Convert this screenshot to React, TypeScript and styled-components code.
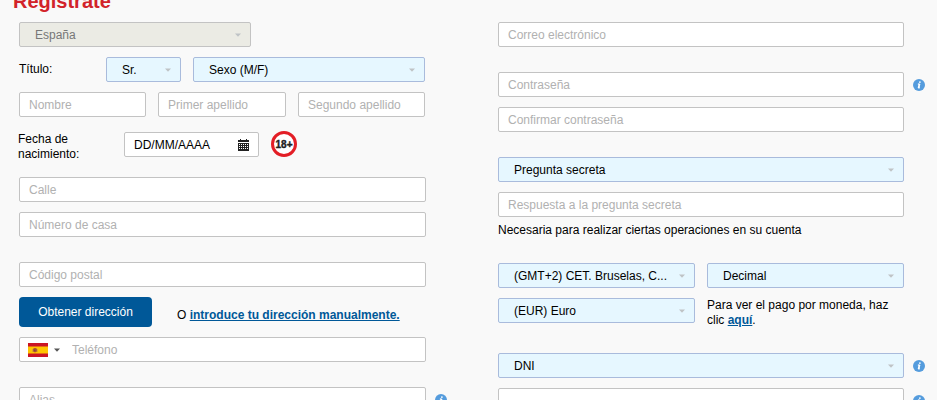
import React from "react";
import styled, { createGlobalStyle } from "styled-components";

const GlobalStyle = createGlobalStyle`
  *, *::before, *::after { box-sizing: border-box; }
  body {
    margin: 0;
    background: #f9f9f9;
    color: #000;
    font: 12px/15px "Liberation Sans", Arial, sans-serif;
  }
  input, select, button { font: inherit; }
`;

const Page = styled.main`
  height: 100vh;
  overflow: hidden;
`;

const Title = styled.h1`
  margin: -11px 0 8px 13px;
  color: #d2232a;
  font-size: 20px;
  line-height: 25px;
`;

const Form = styled.form`
  display: grid;
  grid-template-columns: 428fr 427fr;
  column-gap: 51px;
  padding: 0 12px 0 19px;
`;

const Column = styled.div`
  display: flex;
  flex-direction: column;
  min-width: 0;
`;

const Section = styled.div`
  display: flex;
  flex-direction: column;
  gap: 10px;
  margin-bottom: 25px;
`;

const Line = styled.div`
  display: grid;
  grid-template-columns: minmax(0, 1fr) 12px;
  column-gap: 9px;
  align-items: center;
`;

const Split = styled.div<{ $columns: string }>`
  display: grid;
  grid-template-columns: ${(p) => p.$columns};
  column-gap: 12px;
  align-items: center;
  padding-right: 1px;
`;

const Pair = styled.div`
  display: grid;
  grid-template-columns: 1fr 1fr;
  gap: 10px 12px;
  align-items: start;
`;

const TextField = styled.input`
  display: block;
  width: 100%;
  min-width: 0;
  height: 25px;
  padding: 0 9px;
  border: 1px solid #c3c3c3;
  border-radius: 2px;
  background: #fff;
  color: #000;
  &::placeholder { color: #b1b1b1; opacity: 1; }
`;

const Stack = styled.div`
  display: grid;
  align-items: center;
  min-width: 0;
  > * { grid-area: 1 / 1; }
  > svg { justify-self: end; margin-right: 10px; pointer-events: none; z-index: 1; }
`;

const SelectField = styled.select`
  appearance: none;
  width: 100%;
  min-width: 0;
  height: 25px;
  padding: 2px 20px 0 15px;
  border: 1px solid #a9bbdc;
  border-radius: 2px;
  background: #e6f7ff;
  color: #000;
  text-overflow: ellipsis;
  &:disabled {
    border-color: #c3c3c3;
    background: #ebebe4;
    color: #777;
    opacity: 1;
  }
`;

const BirthRow = styled.div`
  display: flex;
  align-items: flex-start;
  margin: 5px 0 5px -1px;
`;

const BirthLabel = styled.label`
  width: 106px;
  padding-right: 30px;
`;

const DateBox = styled(Stack)`
  width: 135px;
  margin-right: 12px;
`;

const AddressRow = styled.div`
  display: flex;
  align-items: center;
  gap: 25px;
`;

const LookupButton = styled.button`
  width: 133px;
  height: 30px;
  padding: 0;
  border: 0;
  border-radius: 4px;
  background: #005898;
  color: #fff;
`;

const Manual = styled.span`
  padding-top: 6px;
`;

const TextLink = styled.a`
  color: #005898;
  font-weight: bold;
  text-decoration: underline;
`;

const Note = styled.p`
  margin: 0;
`;

const AnswerNote = styled(Note)`
  margin-top: -4px;
`;

const PhoneBox = styled.div`
  display: flex;
  align-items: center;
  height: 25px;
  border: 1px solid #c3c3c3;
  border-radius: 2px;
  background: #fff;
`;

const CountryButton = styled.button`
  display: flex;
  align-items: center;
  gap: 6px;
  padding: 0 3px 0 8px;
  border: 0;
  background: none;
`;

const PhoneInput = styled(TextField)`
  height: 23px;
  border: 0;
`;

const InfoButton = styled.button`
  display: block;
  width: 12px;
  height: 12px;
  padding: 0;
  border: 0;
  background: none;
  svg { display: block; }
`;

const Caret = ({ color = "#bfc3c6" }: { color?: string }) => (
  <svg width="6" height="4" viewBox="0 0 6 4" aria-hidden="true">
    <path d="M0 0.5h6L3 3.8z" fill={color} />
  </svg>
);

const Info = ({ label }: { label: string }) => (
  <InfoButton type="button" aria-label={label}>
    <svg width="12" height="12" viewBox="0 0 12 12" aria-hidden="true">
      <circle cx="6" cy="6" r="6" fill="#559cdd" />
      <circle cx="6.9" cy="3.1" r="0.9" fill="#fff" />
      <path d="M5 5h1.9L6 8.7h.8M4.8 5.1h1.4M5 9h1.7" fill="none" stroke="#fff" strokeWidth="0.8" />
      <path d="M5.6 5h1.6L6.2 9H4.7z" fill="#fff" />
    </svg>
  </InfoButton>
);

const Calendar = () => (
  <svg width="11" height="12" viewBox="0 0 11 12" aria-hidden="true">
    <path d="M0 1h2V0h1v1h5V0h1v1h2v2H0zM0 4h11v8H0z" fill="#222" />
    <path d="M1 5.5h9M1 7.5h9M1 9.5h9" stroke="#fff" strokeWidth="1" strokeDasharray="1 1" />
  </svg>
);

const AdultBadge = () => (
  <svg width="26" height="26" viewBox="0 0 26 26" role="img" aria-label="18+">
    <circle cx="13" cy="12" r="11.5" fill="#fff" stroke="#e31e26" strokeWidth="3" />
    <text x="13" y="16" textAnchor="middle" fontFamily="Liberation Sans, Arial, sans-serif" fontWeight="bold" fontSize="10" fill="#222" stroke="#222" strokeWidth="0.4">18+</text>
  </svg>
);

const BadgeSlot = styled.span`
  display: flex;
  svg { overflow: visible; }
`;

const SpainFlag = () => (
  <svg width="20" height="14" viewBox="0 0 20 14" aria-hidden="true">
    <path d="M0 0h20v14H0z" fill="#cb1524" />
    <path d="M0 3.5h20v7H0z" fill="#ffc400" />
    <path d="M5 5.5h1V5h2v.5h1v3L7 9.5 5 8.5z" fill="#b25a2c" />
    <path d="M6 6.5h1.5v1.8H6z" fill="#7b3c4c" />
    <path d="M4.5 6v3M9.5 6v3" stroke="#c89a36" strokeWidth=".7" />
  </svg>
);

type SelectProps = { label: string; value: string; disabled?: boolean; id?: string };

const Select = ({ label, value, disabled, id }: SelectProps) => (
  <Stack>
    <SelectField id={id} aria-label={label} disabled={disabled} defaultValue={value}>
      <option>{value}</option>
    </SelectField>
    <Caret />
  </Stack>
);

type FieldProps = { label: string; type?: string; info?: boolean; hint?: string };

const Field = ({ label, type = "text", info, hint = label }: FieldProps) => (
  <Line>
    <TextField type={type} placeholder={hint} aria-label={label} />
    {info && <Info label={`Información: ${label}`} />}
  </Line>
);

export default function App() {
  return (
    <Page>
      <GlobalStyle />
      <Title>Regístrate</Title>
      <Form>
        <Column>
          <Section>
            <Line>
              <Split $columns="232px">
                <Select label="País" value="España" disabled />
              </Split>
            </Line>
            <Line>
              <Split $columns="75px 75px 1fr">
                <label htmlFor="titulo">Título:</label>
                <Select id="titulo" label="Título" value="Sr." />
                <Select label="Sexo" value="Sexo (M/F)" />
              </Split>
            </Line>
            <Line>
              <Split $columns="127fr 128fr 127fr">
                <TextField placeholder="Nombre" aria-label="Nombre" />
                <TextField placeholder="Primer apellido" aria-label="Primer apellido" />
                <TextField placeholder="Segundo apellido" aria-label="Segundo apellido" />
              </Split>
            </Line>
            <BirthRow>
              <BirthLabel htmlFor="nacimiento">Fecha de nacimiento:</BirthLabel>
              <DateBox>
                <TextField id="nacimiento" defaultValue="DD/MM/AAAA" />
                <Calendar />
              </DateBox>
              <BadgeSlot>
                <AdultBadge />
              </BadgeSlot>
            </BirthRow>
            <Field label="Calle" />
            <Field label="Número de casa" />
          </Section>
          <Section>
            <Field label="Código postal" />
            <AddressRow>
              <LookupButton type="button">Obtener dirección</LookupButton>
              <Manual>
                O <TextLink href="#manual">introduce tu dirección manualmente.</TextLink>
              </Manual>
            </AddressRow>
            <Line>
              <PhoneBox>
                <CountryButton type="button" aria-label="Prefijo: España">
                  <SpainFlag />
                  <Caret color="#555" />
                </CountryButton>
                <PhoneInput type="tel" placeholder="Teléfono" aria-label="Teléfono" />
              </PhoneBox>
            </Line>
          </Section>
          <Field label="Alias" info />
        </Column>
        <Column>
          <Section>
            <Field label="Correo electrónico" type="email" />
          </Section>
          <Section>
            <Field label="Contraseña" type="password" info />
            <Field label="Confirmar contraseña" type="password" />
          </Section>
          <Section>
            <Line>
              <Select label="Pregunta secreta" value="Pregunta secreta" />
            </Line>
            <Field label="Respuesta a la pregunta secreta" />
            <AnswerNote>Necesaria para realizar ciertas operaciones en su cuenta</AnswerNote>
          </Section>
          <Section>
            <Line>
              <Pair>
                <Select label="Zona horaria" value="(GMT+2) CET. Bruselas, C..." />
                <Select label="Formato de cuotas" value="Decimal" />
                <Select label="Moneda" value="(EUR) Euro" />
                <Note>
                  Para ver el pago por moneda, haz clic <TextLink href="#moneda">aquí</TextLink>.
                </Note>
              </Pair>
            </Line>
          </Section>
          <Section>
            <Line>
              <Select label="Tipo de documento" value="DNI" />
              <Info label="Información: documento" />
            </Line>
            <Field label="Número de documento" hint="" info />
          </Section>
        </Column>
      </Form>
    </Page>
  );
}
